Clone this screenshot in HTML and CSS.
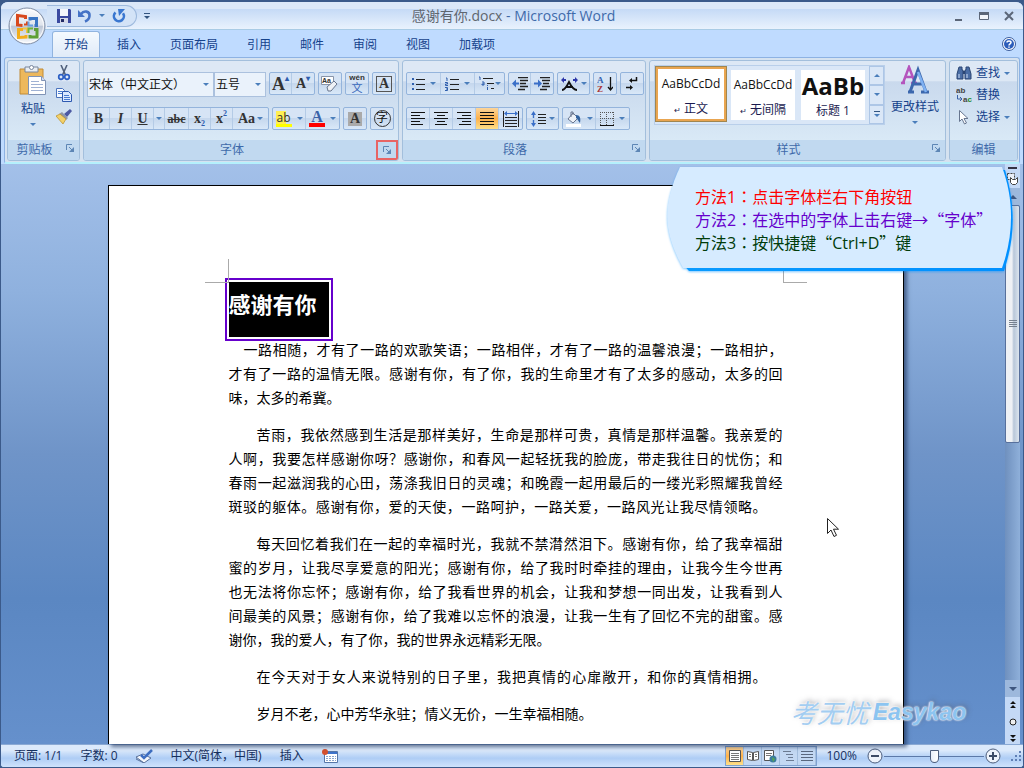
FILE: index.html
```html
<!DOCTYPE html>
<html lang="zh-CN">
<head>
<meta charset="utf-8">
<title>感谢有你.docx - Microsoft Word</title>
<link rel="stylesheet" href="styles.css">
</head>
<body>
<svg class="defs" aria-hidden="true">
  <defs>
    <linearGradient id="orb" x1="0" y1="0" x2="0" y2="1"><stop offset="0" stop-color="#fdfdfe"/><stop offset=".48" stop-color="#dfe4ec"/><stop offset=".5" stop-color="#bcc6d6"/><stop offset="1" stop-color="#f7f9fc"/></linearGradient>
    <linearGradient id="callout-shade" x1="0" y1="0" x2="1" y2="0"><stop offset="0" stop-color="#0a9bff"/><stop offset="1" stop-color="#0090ff"/></linearGradient>
  </defs>
  <symbol id="launcher" viewBox="0 0 8 8"><path d="M.5 6V.5H6" fill="none" stroke="#5d86b5"/><path d="M3 3l3 3" stroke="#5d86b5"/><path d="M8 3v5H3z" fill="#5d86b5"/></symbol>
  <symbol id="bullets" viewBox="0 0 14 14"><path d="M5 2.500h9M5 7.500h9M5 12.500h9" stroke="#222"/><path d="M1 1h2v2H1zM1 6h2v2H1zM1 11h2v2H1z" fill="#2f5fae"/></symbol>
  <symbol id="numbers" viewBox="0 0 14 14"><path d="M5 2.500h9M5 7.500h9M5 12.500h9" stroke="#222"/><path d="M1 1h1v3M0 5.500h2.500v1.500H.5v1.500H3M0 10.500h2.500v3H0M1 12h1" fill="none" stroke="#2f5fae"/></symbol>
  <symbol id="multilevel" viewBox="0 0 17 15"><path d="M5 2.500h10M9 7.500h7M13 12.500h3" stroke="#222"/><path d="M1 1h1v3M4 6h2v3H4V8h2M9.500 11v3M9.500 9v1" fill="none" stroke="#2f5fae"/></symbol>
  <symbol id="outdent" viewBox="0 0 16 14"><path d="M6 .5h10M8 3.500h8M8 6.500h6M8 9.500h8M6 12.500h7" stroke="#222" stroke-width="1.500"/><path d="M0 6.500l4-4v3h3v2H4v3z" fill="#3a6fc8"/></symbol>
  <symbol id="indent" viewBox="0 0 16 14"><path d="M6 .5h10M8 3.500h8M9 6.500h6M8 9.500h8M6 12.500h7" stroke="#222" stroke-width="1.500"/><path d="M8 6.500l-4-4v3H0v2h4v3z" fill="#3a6fc8"/></symbol>
  <symbol id="left" viewBox="0 0 14 13"><path d="M0 .5h14M0 3.500h9M0 6.500h14M0 9.500h9M0 12.500h12" stroke="#111"/></symbol>
  <symbol id="center" viewBox="0 0 14 13"><path d="M0 .5h14M3 3.500h8M0 6.500h14M3 9.500h8M1 12.500h12" stroke="#111"/></symbol>
  <symbol id="right" viewBox="0 0 14 13"><path d="M0 .5h14M5 3.500h9M0 6.500h14M5 9.500h9M2 12.500h12" stroke="#111"/></symbol>
  <symbol id="justify" viewBox="0 0 14 13"><path d="M0 .5h14M0 3.500h14M0 6.500h14M0 9.500h14M0 12.500h14" stroke="#111"/></symbol>
  <symbol id="cut" viewBox="0 0 14 16"><path d="M4 0l4.500 10M10 0L5.500 10" stroke="#51617c" stroke-width="1.600" fill="none"/><circle cx="4" cy="12" r="2.300" fill="none" stroke="#2c5fc4" stroke-width="1.700"/><circle cx="10" cy="12" r="2.300" fill="none" stroke="#2c5fc4" stroke-width="1.700"/></symbol>
  <symbol id="cursor" viewBox="0 0 12 19"><path d="M.5.5v15l3.500-3.500 3 6.500 2.500-1.200-3-6.100h5z" fill="#fff" stroke="#222"/></symbol>
</svg>

<div class="window">
  <header class="titlebar">
    <button class="office" aria-label="Office">
      <svg width="38" height="38" viewBox="0 0 38 38"><circle cx="19" cy="19" r="18" fill="url(#orb)" stroke="#7f8da5"/><circle cx="19" cy="19" r="16.500" fill="none" stroke="#fff" opacity=".8"/>
        <g fill="none" stroke-width="3"><path d="M17.500 12V9.500L9.500 8.500v9.500l5 .5" stroke="#d8481c"/><path d="M22 13.500v-2h6.500v7h-2" stroke="#3b76c4"/><path d="M15 22.500H10.500v8l7.500-.5v-2" stroke="#f2ad1c"/><path d="M22 28v2h7v-7.500h-3" stroke="#5f9f35"/></g>
        <path d="M16 17.500h3v-3" fill="none" stroke="#d8481c" stroke-width="2"/><path d="M20.500 14.500v4H25" fill="none" stroke="#6aa0e0" stroke-width="2"/><path d="M15 21.500h4V26" fill="none" stroke="#f6c442" stroke-width="2"/><path d="M25 21.500h-4.500V26" fill="none" stroke="#6eb33f" stroke-width="2"/></svg>
    </button>
    <div class="quick">
      <button aria-label="保存"><svg width="14" height="14" viewBox="0 0 14 14"><path d="M0 0h13l1 1v13H0z" fill="#3b4aa0"/><path d="M3 0h8v7H3z" fill="#f4f6fb"/><path d="M3 9h8v5H3z" fill="#d5d9e8"/><path d="M4 10h3v3H4z" fill="#222b66"/></svg></button>
      <button aria-label="撤消"><svg width="14" height="14" viewBox="0 0 14 14"><path d="M3 5C6 1 12 2 11.500 7c-.2 3-2 4.500-4.500 5.500" fill="none" stroke="#4573c6" stroke-width="2.600"/><path d="M0 1v7h7z" fill="#4573c6"/></svg></button>
      <i class="arrow"></i>
      <button aria-label="重复"><svg width="14" height="14" viewBox="0 0 14 14"><path d="M3.500 3.500a5 5 0 1 0 7.500.8" fill="none" stroke="#3a77d0" stroke-width="2.600"/><path d="M6 0h7L7 7z" fill="#3a77d0"/></svg></button>
    </div>
    <button class="customize" aria-label="自定义快速访问工具栏"><i class="bar"></i><i class="arrow"></i></button>
    <h1 class="caption"><span>感谢有你.docx</span> - Microsoft Word</h1>
    <div class="controls">
      <button aria-label="最小化"><svg width="10" height="10" viewBox="0 0 10 10"><path d="M1 8h7v2H1z" fill="#5b6678"/></svg></button>
      <button aria-label="最大化"><svg width="10" height="10" viewBox="0 0 10 10"><path d="M.5 2v6.500h9V2" fill="#f3f6fb" stroke="#5b6678"/><path d="M0 1h10v3H0z" fill="#5b6678"/></svg></button>
      <button aria-label="关闭"><svg width="10" height="10" viewBox="0 0 10 10"><path d="M1 1l8 8M9 1L1 9" stroke="#5b6678" stroke-width="2"/></svg></button>
    </div>
  </header>

  <nav class="tabs">
    <button class="tab active">开始</button><button class="tab">插入</button><button class="tab">页面布局</button><button class="tab">引用</button><button class="tab">邮件</button><button class="tab">审阅</button><button class="tab">视图</button><button class="tab">加载项</button>
    <button class="help" aria-label="帮助"><svg width="14" height="14" viewBox="0 0 14 14"><circle cx="7" cy="7" r="6.500" fill="#fff" stroke="#3a5c9c"/><circle cx="7" cy="7" r="5" fill="#2c5dba"/><path d="M5 5.500C5 3.500 9 3.500 9 5.500 9 7 7 6.800 7 8.500M7 9.500v1.300" fill="none" stroke="#fff" stroke-width="1.500"/></svg></button>
  </nav>

  <section class="ribbon">
    <div class="group">
      <div class="tools clipboard">
        <button class="paste"><svg width="28" height="31" viewBox="0 0 28 31"><path d="M1 4h23v25H1z" fill="#edb85c" stroke="#c08a35"/><path d="M6 2h13v5H6z" fill="#e9edf2" stroke="#78869c"/><circle cx="12.500" cy="2.500" r="2" fill="#fff" stroke="#78869c"/><path d="M9.500 11.500h13l4 4v14h-17z" fill="#fff" stroke="#8093b5"/><path d="M22.500 11.500v4h4" fill="#cfdaf0" stroke="#8093b5"/><path d="M12 16.500h8M12 19.500h12M12 22.500h12M12 25.500h12" stroke="#9fb1d3"/></svg><span>粘贴</span><i class="arrow"></i></button>
        <div class="clip-side">
          <button aria-label="剪切"><svg width="14" height="16"><use href="#cut"/></svg></button>
          <button aria-label="复制"><svg width="16" height="14" viewBox="0 0 16 14"><path d="M.5.5h6l2 2v7h-8z" fill="#f6faff" stroke="#4a73bd"/><path d="M6.500 3.500h6l3 3v7h-9z" fill="#dbe9ff" stroke="#2d59b0"/><path d="M2 3.500h4M2 5.500h4M8 7.500h5M8 9.500h6M8 11.500h6" stroke="#4a7ccf"/></svg></button>
          <button aria-label="格式刷"><svg width="16" height="15" viewBox="0 0 16 15"><path d="M14 0l2 2-5 6-3-3z" fill="#4c59a3"/><path d="M6 3l6 6-2 2-7-6z" fill="#8e96a8"/><path d="M0 7l4-2 6 5-3 5z" fill="#f3d169" stroke="#b88c25" stroke-width=".7"/></svg></button>
        </div>
      </div>
      <footer class="launchable"><span>剪贴板</span><button class="launch" aria-label="剪贴板选项"><svg width="8" height="8"><use href="#launcher"/></svg></button></footer>
    </div>

    <div class="group">
      <div class="tools rows">
        <div class="row">
          <div class="combos"><label class="combo wide"><select aria-label="字体"><option>宋体（中文正文）</option></select><i class="arrow"></i></label><label class="combo"><select aria-label="字号"><option>五号</option></select><i class="arrow"></i></label></div>
          <div class="cluster"><button class="serif big" aria-label="增大字体">A<sup>▴</sup></button><button class="serif" aria-label="缩小字体">A<sup>▾</sup></button></div>
          <div class="cluster"><button aria-label="清除格式"><svg width="18" height="18" viewBox="0 0 18 18"><path d="M.5 1.500h12v8H.5z" fill="#fff" stroke="#8995a9"/><text x="1" y="8" font-size="7" class="mini">Aa</text><path d="M6 12l7-6 3 3-6 7H7z" fill="#eef1f6" stroke="#68758d"/></svg></button></div>
          <div class="cluster"><button class="phonetic"><b>wén</b><span>文</span></button></div>
          <div class="cluster"><button class="serif" aria-label="字符边框"><span class="boxed">A</span></button></div>
        </div>
        <div class="row">
          <div class="cluster"><button class="serif">B</button><button class="serif"><em>I</em></button><button class="serif"><u>U</u></button><button class="drop" aria-label="下划线选项"><i class="arrow"></i></button><button class="serif small"><s>abc</s></button><button class="serif">x<sub>2</sub></button><button class="serif">x<sup>2</sup></button><button class="serif case">Aa<i class="arrow"></i></button></div>
          <div class="cluster"><button class="pair"><span class="mark">ab</span><i class="arrow"></i></button><button class="pair"><span class="color">A</span><i class="arrow"></i></button></div>
          <div class="cluster"><button class="serif" aria-label="字符底纹"><span class="shade">A</span></button></div>
          <div class="cluster"><button aria-label="带圈字符"><span class="ring">字</span></button></div>
        </div>
      </div>
      <footer class="launchable"><span>字体</span><button class="launch marked" aria-label="字体选项"><svg width="8" height="8"><use href="#launcher"/></svg></button></footer>
    </div>

    <div class="group">
      <div class="tools rows">
        <div class="row">
          <div class="cluster lists"><button class="pair" aria-label="项目符号"><svg width="14" height="14"><use href="#bullets"/></svg><i class="arrow"></i></button><button class="pair" aria-label="编号"><svg width="14" height="14"><use href="#numbers"/></svg><i class="arrow"></i></button><button class="tight" aria-label="多级列表"><svg width="17" height="15"><use href="#multilevel"/></svg><i class="arrow"></i></button></div>
          <div class="cluster"><button aria-label="减少缩进"><svg width="16" height="14"><use href="#outdent"/></svg></button><button aria-label="增加缩进"><svg width="16" height="14"><use href="#indent"/></svg></button></div>
          <div class="cluster"><button class="pair" aria-label="中文版式"><svg width="17" height="14" viewBox="0 0 17 14"><path d="M1 13c3 0 7-8 7-8s4 8 8 8M5 10h7" fill="none" stroke="#111" stroke-width="1.800"/><path d="M0 3l3-3v2h2v2H3v2zM17 3l-3-3v2h-2v2h2v2z" fill="#2b35a8"/></svg><i class="arrow"></i></button></div>
          <div class="cluster"><button aria-label="排序"><svg width="16" height="18" viewBox="0 0 16 18"><path d="M13.500 2v12M11 12l2.500 3 2.500-3" fill="none" stroke="#111" stroke-width="1.300"/><text x="0" y="8" class="sort-a">A</text><text x="0" y="17" class="sort-z">Z</text></svg></button></div>
          <div class="cluster"><button aria-label="显示标记"><svg width="12" height="14" viewBox="0 0 12 14"><path d="M10.500 0v3.500H5M0 10.500h5" fill="none" stroke="#111" stroke-width="1.500"/><path d="M6 1v5L3 3.500zM4 8l3 2.500L4 13z" fill="#111"/></svg></button></div>
        </div>
        <div class="row">
          <div class="cluster aligns"><button aria-label="左对齐"><svg width="14" height="13"><use href="#left"/></svg></button><button aria-label="居中"><svg width="14" height="13"><use href="#center"/></svg></button><button aria-label="右对齐"><svg width="14" height="13"><use href="#right"/></svg></button><button class="on" aria-label="两端对齐"><svg width="14" height="13"><use href="#justify"/></svg></button><button aria-label="分散对齐"><svg width="16" height="16" viewBox="0 0 16 16"><path d="M.5 0v16M15.500 0v16M2 6.500h12M2 9.500h12M2 12.500h12M2 15.500h12" stroke="#222"/><path d="M1 2.500l3-2.500v2h8V0l3 2.500-3 2.500V3H4v2z" fill="#3a6fc8"/></svg></button></div>
          <div class="cluster"><button class="pair" aria-label="行距"><svg width="15" height="16" viewBox="0 0 15 16"><path d="M0 4l2.500-4L5 4H3.200v3H1.800V4zM0 12l2.500 4L5 12H3.200V9H1.800v3z" fill="#3a6fc8"/><path d="M7 3.500h8M7 6.500h8M7 9.500h8M7 12.500h8" stroke="#222"/></svg><i class="arrow"></i></button></div>
          <div class="cluster"><button class="pair" aria-label="底纹"><svg width="16" height="16" viewBox="0 0 16 16"><path d="M7 2l5 5-5 5-5-4z" fill="#eef2f8" stroke="#68758d"/><path d="M5 6V1h2v3" fill="none" stroke="#68758d"/><path d="M10 4c4 0 5 3 4 8-2-2-2-4-4-5z" fill="#34639f"/><path d="M0 13h15v3H0z" fill="#fff"/></svg><i class="arrow"></i></button><button class="pair" aria-label="边框"><svg width="14" height="14" viewBox="0 0 14 14"><path d="M.5 0v13M13.500 0v13M6.500 0v13M0 .5h14M0 6.500h14" stroke="#555" stroke-dasharray="1 1"/><path d="M0 13.500h14" stroke="#111"/></svg><i class="arrow"></i></button></div>
        </div>
      </div>
      <footer class="launchable"><span>段落</span><button class="launch" aria-label="段落选项"><svg width="8" height="8"><use href="#launcher"/></svg></button></footer>
    </div>

    <div class="group">
      <div class="tools styles">
        <div class="gallery">
          <button class="style chosen"><b>AaBbCcDd</b><span><small>↵</small> 正文</span></button>
          <button class="style"><b>AaBbCcDd</b><span><small>↵</small> 无间隔</span></button>
          <button class="style heading"><b>AaBb</b><span>标题 1</span></button>
          <div class="spin"><button aria-label="上一行"><i class="arrow up"></i></button><button aria-label="下一行"><i class="arrow"></i></button><button aria-label="其他"><i class="bar"></i><i class="arrow"></i></button></div>
        </div>
        <button class="change"><svg width="30" height="29" viewBox="0 0 30 29"><path d="M1 18h4M11 18h6M3 18L9 2l6 16M6 12h7" fill="none" stroke="#b455bd" stroke-width="2.500"/><path d="M8 27h6M21 27h8M10 27L18 5l8 22M13 19h10" fill="none" stroke="#3b67ad" stroke-width="3"/><path d="M18 7l8 20" stroke="#7fb1f2" stroke-width="2.500"/></svg><span>更改样式</span><i class="arrow"></i></button>
      </div>
      <footer class="launchable"><span>样式</span><button class="launch" aria-label="样式选项"><svg width="8" height="8"><use href="#launcher"/></svg></button></footer>
    </div>

    <div class="group">
      <div class="tools edit">
        <button><svg width="16" height="14" viewBox="0 0 16 14"><path d="M3 1h3v3h1v9H1V8zM13 1h-3v3H9v9h6V8z" fill="#4a6da5" stroke="#2c4674"/><path d="M7 5h2v3H7z" fill="#2c4674"/><path d="M3 8v4M11 8v4" stroke="#cfe0f7"/></svg><span>查找</span><i class="arrow"></i></button>
        <button><svg width="16" height="16" viewBox="0 0 16 16"><text x="0" y="6" class="rep">ab</text><path d="M1.500 8v4h4M4 10l2 2-2 2" fill="none" stroke="#3b62a8"/><text x="7" y="15" class="rep">a<tspan fill="#1c8b2a">c</tspan></text></svg><span>替换</span></button>
        <button><svg width="16" height="15" viewBox="0 0 16 15"><path d="M3.500.5v11L6 9l2.500 5 2-1L8 8.500h4z" fill="#fff" stroke="#66758f"/></svg><span>选择</span><i class="arrow"></i></button>
      </div>
      <footer><span>编辑</span></footer>
    </div>
  </section>

  <main class="workspace">
    <div class="canvas">
      <article class="page">
        <i class="crop tl"></i><i class="crop tr"></i>
        <h2>感谢有你</h2>
        <p class="one"><span>一路相随，才有了一路的欢歌笑语；一路相伴，才有了一路的温馨浪漫；一路相护，</span><span>才有了一路的温情无限。感谢有你，有了你，我的生命里才有了太多的感动，太多的回</span><span class="short">味，太多的希冀。</span></p>
        <p><span>苦雨，我依然感到生活是那样美好，生命是那样可贵，真情是那样温馨。我亲爱的</span><span>人啊，我要怎样感谢你呀？感谢你，和春风一起轻抚我的脸庞，带走我往日的忧伤；和</span><span>春雨一起滋润我的心田，荡涤我旧日的灵魂；和晚霞一起用最后的一缕光彩照耀我曾经</span><span class="near">斑驳的躯体。感谢有你，爱的天使，一路呵护，一路关爱，一路风光让我尽情领略。</span></p>
        <p><span>每天回忆着我们在一起的幸福时光，我就不禁潸然泪下。感谢有你，给了我幸福甜</span><span>蜜的岁月，让我尽享爱意的阳光；感谢有你，给了我时时牵挂的理由，让我今生今世再</span><span>也无法将你忘怀；感谢有你，给了我看世界的机会，让我和梦想一同出发，让我看到人</span><span>间最美的风景；感谢有你，给了我难以忘怀的浪漫，让我一生有了回忆不完的甜蜜。感</span><span class="short">谢你，我的爱人，有了你，我的世界永远精彩无限。</span></p>
        <p><span class="near">在今天对于女人来说特别的日子里，我把真情的心扉敞开，和你的真情相拥。</span></p>
        <p><span class="short">岁月不老，心中芳华永驻；情义无价，一生幸福相随。</span></p>
      </article>
      <div class="watermark"><span>考无忧</span><b>Easykao</b></div>
      <svg class="pointer" width="12" height="19"><use href="#cursor"/></svg>
    </div>
    <div class="scroll">
      <i class="split"></i>
      <button class="ruler" aria-label="标尺"><svg width="12" height="13" viewBox="0 0 12 13"><path d="M.5.500h7v6h-7z" fill="#e8eef8" stroke="#444" stroke-dasharray="2 1"/><path d="M3.500 4.500l2 2h3l2-2v5l-2 2h-3l-2-2z" fill="#fff" stroke="#444"/></svg></button>
      <button class="step" aria-label="向上滚动"><i class="arrow up"></i></button>
      <div class="track"><div class="thumb"><svg width="8" height="8" viewBox="0 0 8 8"><path d="M0 .5h8M0 2.500h8M0 4.500h8M0 6.500h8" stroke="#77818f"/></svg></div></div>
      <button class="step" aria-label="向下滚动"><i class="arrow"></i></button>
      <div class="browse">
        <button aria-label="前一页"><svg width="6" height="8" viewBox="0 0 6 8"><path d="M0 3l3-3 3 3zM0 7l3-3 3 3z" fill="#111"/></svg></button>
        <button aria-label="选择浏览对象"><svg width="8" height="8" viewBox="0 0 8 8"><circle cx="4" cy="4" r="3" fill="#eee" stroke="#222"/></svg></button>
        <button aria-label="下一页"><svg width="6" height="8" viewBox="0 0 6 8"><path d="M0 0l3 3 3-3zM0 4l3 3 3-3z" fill="#111"/></svg></button>
      </div>
    </div>
    <aside class="callout">
      <svg class="shape" viewBox="0 0 346 106" preserveAspectRatio="none" aria-hidden="true"><path d="M18 4H338C348 38 349 68 337 105H22C8 90 6 80 6 60z" fill="url(#callout-shade)"/><path d="M13 1H335C346 30 348 66 335 102H16C-4 66-5 40 13 1z" fill="#d6ebff"/></svg>
      <ol><li class="red">方法1<span class="colon" lang="zh-Hant">：</span>点击字体栏右下角按钮</li><li class="purple">方法2<span class="colon" lang="zh-Hant">：</span>在选中的字体上击右键→<span class="quote">“</span>字体<span class="quote">”</span></li><li class="green">方法3<span class="colon" lang="zh-Hant">：</span>按快捷键<span class="quote">“</span>Ctrl+D<span class="quote">”</span>键</li></ol>
    </aside>
  </main>

  <footer class="status">
    <div class="info">
      <button>页面: 1/1</button><button>字数: 0</button>
      <button aria-label="校对"><svg width="17" height="14" viewBox="0 0 17 14"><path d="M0 8l7-3 8 4-7 5z" fill="#f4f7fb" stroke="#59719b"/><path d="M0 9v1l8 4" fill="none" stroke="#59719b"/><path d="M5 6l3 3 8-8" fill="none" stroke="#3e6fc2" stroke-width="2.500"/></svg></button>
      <button>中文(简体，中国)</button><button>插入</button>
      <button aria-label="宏"><svg width="16" height="14" viewBox="0 0 16 14"><path d="M2.500 2.500h13v11h-13z" fill="#fff" stroke="#5676a8"/><path d="M3 3h12v2H3z" fill="#3e73cb"/><path d="M4 7.500h10M4 9.500h10M4 11.500h10" stroke="#89a4cc" stroke-dasharray="2 1"/><circle cx="3" cy="3" r="3" fill="#d4502e"/></svg></button>
    </div>
    <div class="views">
      <button class="on" aria-label="页面视图"><svg width="12" height="12" viewBox="0 0 12 12"><path d="M.5.500h11v11H.5z" fill="#fff" stroke="#555"/><path d="M2 3.500h8M2 5.500h8M2 7.500h8M2 9.500h8" stroke="#777"/></svg></button>
      <button aria-label="阅读版式"><svg width="12" height="12" viewBox="0 0 12 12"><path d="M.5 1.500l5 1v8l-5-1zM11.500 1.500l-5 1v8l5-1z" fill="#fff" stroke="#555"/><path d="M2 4.500h2M2 6.500h2M8 4.500h2M8 6.500h2" stroke="#777"/></svg></button>
      <button aria-label="Web 版式"><svg width="13" height="13" viewBox="0 0 13 13"><path d="M.5.500h9v10h-9z" fill="#fff" stroke="#555"/><path d="M2 3.500h6M2 5.500h5" stroke="#777"/><circle cx="9" cy="9" r="3.500" fill="#3a7b9c"/><path d="M8 7l3 2-2 3z" fill="#58a84e"/></svg></button>
      <button aria-label="大纲"><svg width="12" height="12" viewBox="0 0 12 12"><path d="M0 1.500h8M3 4.500h7M5 7.500h5M3 10.500h8" stroke="#6d7c94"/></svg></button>
      <button aria-label="普通"><svg width="12" height="12" viewBox="0 0 12 12"><path d="M0 1.500h12M0 4.500h12M0 7.500h12M0 10.500h12" stroke="#59677e"/></svg></button>
    </div>
    <div class="zoom">
      <button class="pct">100%</button>
      <button aria-label="缩小"><svg width="16" height="16" viewBox="0 0 16 16"><circle cx="8" cy="8" r="7" fill="#eef3fb" stroke="#4c5d7c"/><path d="M4 8h8" stroke="#3c4b66" stroke-width="2"/></svg></button>
      <input type="range" min="0" max="100" value="50" aria-label="显示比例">
      <button aria-label="放大"><svg width="16" height="16" viewBox="0 0 16 16"><circle cx="8" cy="8" r="7" fill="#eef3fb" stroke="#4c5d7c"/><path d="M4 8h8M8 4v8" stroke="#3c4b66" stroke-width="2"/></svg></button>
    </div>
    <svg class="grip" width="12" height="12" viewBox="0 0 12 12"><path d="M9 1h2v2H9zM9 5h2v2H9zM5 5h2v2H5zM9 9h2v2H9zM5 9h2v2H5zM1 9h2v2H1z" fill="#5f7fb5"/></svg>
  </footer>
</div>
</body>
</html>
```
FILE: styles.css
```css
* { box-sizing: border-box; }
body { margin: 0; background: #3b5a8a; font: 12px/16px "Open Sans", "Noto Sans CJK SC", sans-serif; color: #15428b; }
button { border: 0; padding: 0; margin: 0; background: none; font: inherit; color: inherit; display: flex; align-items: center; justify-content: center; }
svg { display: block; flex: none; }
.defs { position: absolute; width: 0; height: 0; }
.window { position: relative; display: flex; flex-direction: column; min-height: 100vh; background: #bfdbff; border: 1px solid #3b5a8a; border-width: 2px 1px 1px; border-radius: 8px 8px 4px 4px; overflow: hidden; }
.arrow { width: 0; height: 0; border: solid transparent; border-width: 3px 3px 0; border-top-color: #4a7ebb; flex: none; }
.arrow.up { border-width: 0 3px 3px; border-bottom-color: #4a7ebb; }
.bar { width: 6px; height: 1px; background: #33547f; }

.titlebar { display: flex; align-items: center; height: 28px; background: linear-gradient(#dce8f8 0 25%, #c5daf6 26%, #e9f2fd); border-bottom: 1px solid #a9cbe5; }
.office { position: absolute; left: 7px; top: 5px; z-index: 2; }
.quick { display: flex; align-items: center; gap: 7px; height: 22px; margin-left: 46px; padding: 0 10px; border: 1px solid #9db9dd; border-left: 0; border-radius: 0 11px 11px 0; background: #d3e3f7; }
.customize { flex-direction: column; gap: 2px; margin-left: 7px; }
.customize .arrow { border-top-color: #33547f; }
.caption { flex: 1; margin: 0; text-align: center; font-size: 14px; font-weight: 400; color: #3e6aaa; }
.caption span { color: #5f666f; }
.controls { display: flex; gap: 15px; width: 146px; justify-content: flex-end; padding-right: 9px; }

.tabs { display: flex; height: 27px; align-items: flex-end; padding: 0 7px 0 51px; background: #bfdbff; }
.tab { height: 26px; padding: 0 11px; margin-right: 5px; border: 1px solid transparent; border-bottom: 0; border-radius: 3px 3px 0 0; white-space: nowrap; }
.tab.active { padding: 0 11px; background: linear-gradient(#f4f9fe, #e0ebf8); border-color: #91b4df; }
.help { margin: 0 0 6px auto; }

.ribbon { display: grid; grid-template-columns: 73px 316px 244px 1fr 69px; gap: 3px; margin: 0 3px; padding: 2px 1px 1px 2px; border: 1px solid #8db2e3; border-bottom: 2px solid #b4f0fc; border-radius: 3px; background: #d5e2f0; height: 107px; }
.group { display: flex; flex-direction: column; min-width: 0; border: 1px solid #a3bfdc; border-radius: 3px; background: linear-gradient(#dde8f5 0 20%, #c9d9ed 21%, #d9e9f6 80%); overflow: hidden; }
.tools { flex: 1; min-height: 0; }
.group > footer { display: flex; align-items: center; justify-content: center; position: relative; height: 20px; background: #c1d9f0; color: #3e6aaa; }
.group > .launchable { padding-right: 18px; }
.launch { position: absolute; right: 0; top: 0; width: 18px; height: 16px; }
.launch.marked { width: 22px; height: 20px; border: 2px solid #e86464; }
.clipboard { display: flex; gap: 9px; padding: 4px 4px 0 11px; }
.paste { flex-direction: column; width: 28px; justify-content: flex-start; white-space: nowrap; }
.paste span { margin: 5px 0 6px; }
.clip-side { display: flex; flex-direction: column; gap: 7px; align-items: center; }
.rows { display: flex; flex-direction: column; gap: 12px; padding: 11px 3px 0; }
.row { display: flex; gap: 3px; height: 23px; }
.cluster { display: flex; height: 23px; border: 1px solid #94b4dc; border-radius: 2px; background: linear-gradient(#d6e4f5 0 48%, #c5d7ed 50%, #d9e8f8); }
.cluster button { width: 22px; position: relative; border-right: 1px solid #b4cbe6; }
.cluster button:last-child { border-right: 0; }
.cluster .pair { width: 33px; gap: 5px; }
.cluster .pair:only-child { width: 31px; gap: 3px; }
.cluster.lists .pair { width: 34px; }
.cluster .tight { width: 29px; }
.cluster .drop { width: 11px; }
.cluster.aligns button { width: 23px; }
.cluster .on, .views .on { background: linear-gradient(#fcd59b, #fdb14b 50%, #fee08a); }
.combos { display: flex; }
.combo { position: relative; display: flex; align-items: center; width: 52px; background: #eaf2fb; border: 1px solid #abc1de; height: 25px; padding-right: 4px; }
.combo.wide { width: 127px; }
.combo select { flex: 1; min-width: 0; appearance: none; border: 0; padding: 0 0 0 1px; background: none; font: inherit; color: #111; }
.serif { font-family: "Liberation Serif", serif; font-weight: 700; font-size: 14px; color: #333; }
.big { font-size: 18px; }
.serif sub, .serif sup { font-size: 8px; line-height: 8px; color: #2d5cae; }
.serif sub { align-self: flex-end; margin-bottom: 1px; }
.serif sup { align-self: flex-start; margin-top: 2px; }
.cluster .small { width: 24px; font-size: 12px; }
.cluster .case { width: 35px; gap: 2px; }
.mini { font-family: "Liberation Sans", sans-serif; font-weight: 700; fill: #333; }
.phonetic { flex-direction: column; color: #3867bb; }
.phonetic b { font: 700 8px/8px "Liberation Sans", sans-serif; color: #333; }
.phonetic span { font-size: 11px; line-height: 12px; }
.boxed { border: 1px solid #555; width: 16px; line-height: 14px; }
.shade { background: #aaa; width: 14px; line-height: 14px; }
.ring { width: 17px; height: 17px; border: 1px solid #333; border-radius: 50%; color: #111; line-height: 14px; }
.mark { border-bottom: 3px solid #ff0; background: linear-gradient(90deg, #ffef52 60%, transparent 60%); line-height: 13px; width: 16px; color: #333; }
.color { border-bottom: 4px solid #f00; font: 700 16px/13px "Liberation Serif", serif; color: #3b62a8; width: 16px; }
.sort-a, .sort-z { font: 700 9px "Liberation Serif", serif; fill: #2f5fae; }
.sort-z { fill: #a33; }

.styles { display: flex; gap: 4px; padding: 4px 4px 0; }
.gallery { display: flex; flex: 1; min-width: 0; height: 60px; border: 1px solid #b9cfea; background: #dae7f7; }
.style { flex: 1; min-width: 0; flex-direction: column; justify-content: flex-end; margin: 4px 3px; background: #fff; color: #1a1a4f; white-space: nowrap; overflow: hidden; line-height: 18px; }
.style b { font-weight: 400; color: #111; line-height: 32px; }
.style small { font-size: 8px; }
.style.chosen { flex: 0 0 72px; margin: 0 1px 2px 0; border: 3px solid #e9a550; outline: 1px solid #a08650; outline-offset: -1px; }
.style.heading b { font-size: 24px; font-weight: 700; }
.spin { display: flex; flex-direction: column; width: 15px; margin-left: 1px; }
.spin button { flex: 1; flex-direction: column; gap: 2px; border: 1px solid #adc6e6; }
.change { flex-direction: column; justify-content: flex-start; width: 52px; white-space: nowrap; }
.change span { margin: 5px 0 6px; }
.edit { display: flex; flex-direction: column; gap: 6px; padding: 4px 4px 0 6px; }
.edit button { gap: 4px; justify-content: flex-start; height: 16px; white-space: nowrap; }
.rep { font: 700 8px "Liberation Sans", sans-serif; fill: #444; }

.workspace { position: relative; display: flex; flex: 1; background: linear-gradient(#a3c0e9, #8fb1de 22%, #6f94c8 50%, #5b87c2 75%, #6590cc); }
.canvas { position: relative; flex: 1; display: flex; justify-content: center; padding: 21px 0 0 5px; }
.page { position: relative; width: 100%; max-width: 796px; padding: 96px 120px 0; background: #fff; border: 1px solid #000; border-width: 1px 1px 0; box-shadow: 3px 3px 4px rgba(20, 40, 80, .6); color: #000; font-size: 14px; line-height: 24px; }
.page h2 { width: max-content; margin: 0; padding: 5px 12px 18px 0; background: #000; color: #fff; font: 700 22px/32px "Noto Sans CJK SC", sans-serif; outline: 2px solid #6600cc; outline-offset: 2px; }
.page p { margin: 0 0 13px; text-indent: 28px; font-family: "Noto Sans CJK SC", sans-serif; }
.page p.one { text-indent: 15px; }
.page p span { display: block; text-align-last: justify; }
.page p span + span { text-indent: 0; }
.page p .near { padding-right: 16px; }
.page p .short { text-align-last: left; }
.crop { position: absolute; top: 73px; width: 24px; height: 24px; border: solid #aaa; }
.tl { left: 96px; border-width: 0 1px 1px 0; }
.tr { right: 96px; border-width: 0 0 1px 1px; }
.watermark { position: absolute; right: 39px; bottom: 14px; display: flex; align-items: center; gap: 4px; font: italic 26px/36px "Noto Sans CJK SC", sans-serif; color: #a3cdf1; text-shadow: 0 0 2px #fff, 0 0 2px #fff, 2px -2px 5px rgba(90, 90, 100, .5); }
.watermark b { font-family: "Liberation Sans Narrow", "Liberation Sans", sans-serif; font-size: 23px; color: #8cc4f0; }
.pointer { position: absolute; left: 826px; top: 354px; }
.scroll { display: flex; flex-direction: column; align-items: stretch; width: 15px; margin-right: 3px; background: #c4d9f6; }
.split { height: 2px; margin: 3px 3px 2px; background: #334; }
.ruler { height: 17px; }
.step { height: 17px; background: #9db8dc; }
.step .arrow { border-width: 4px 4px 0; border-top-color: #3f567e; }
.step .arrow.up { border-width: 0 4px 4px; border-bottom-color: #3f567e; }
.track { flex: 1; background: linear-gradient(90deg, #6f90be, #8fb0da); }
.thumb { height: 50%; display: flex; align-items: center; justify-content: center; border: 1px solid #57709c; border-radius: 2px; background: linear-gradient(90deg, #eef1f5 45%, #b8c7d9 60%, #dce5ee); }
.browse { display: flex; flex-direction: column; justify-content: space-between; padding: 4px 0 1px; height: 47px; }
.callout { position: absolute; right: 10px; top: 2px; width: 346px; padding: 19px 0 18px 28px; color: #f00; font: 16px/23px "Open Sans", "Noto Sans CJK SC", sans-serif; }
.shape { position: absolute; left: 0; top: 0; width: 100%; height: 100%; filter: drop-shadow(0 1px 1px #0090ff80); }
.callout ol { position: relative; margin: 0; padding: 0; list-style: none; white-space: nowrap; }
.callout li { height: 23px; }
.purple { color: #6600cc; }
.green { color: #003c0a; }
.colon { font-family: "Noto Sans CJK TC", sans-serif; }
.quote { font-family: "Noto Sans CJK SC", sans-serif; }

.status { display: flex; align-items: center; height: 23px; padding-right: 1px; border-top: 1px solid #8aa9d4; background: linear-gradient(#dbe9fb 0 25%, #c6dcf8 40%, #aecdf5 60%, #cfe3fc); color: #15305e; }
.info { display: flex; gap: 18px; padding-left: 13px; flex: 1; white-space: nowrap; }
.views { display: flex; border: 1px solid #7fa0cf; background: #c3d8f3; }
.views button { width: 18px; height: 18px; border-right: 1px solid #a3bede; }
.zoom { display: flex; align-items: center; gap: 1px; padding: 0 9px; }
.pct { margin-right: 9px; }
.zoom input { appearance: none; width: 100px; height: 14px; margin: 0; background: linear-gradient(#5c79a8, #5c79a8) center / 100% 1px no-repeat; }
.zoom input::-webkit-slider-thumb { appearance: none; width: 9px; height: 13px; background: linear-gradient(90deg, #e9f0fb, #fff); border: 1px solid #4c5d7c; border-radius: 1px 1px 5px 5px; }
```
